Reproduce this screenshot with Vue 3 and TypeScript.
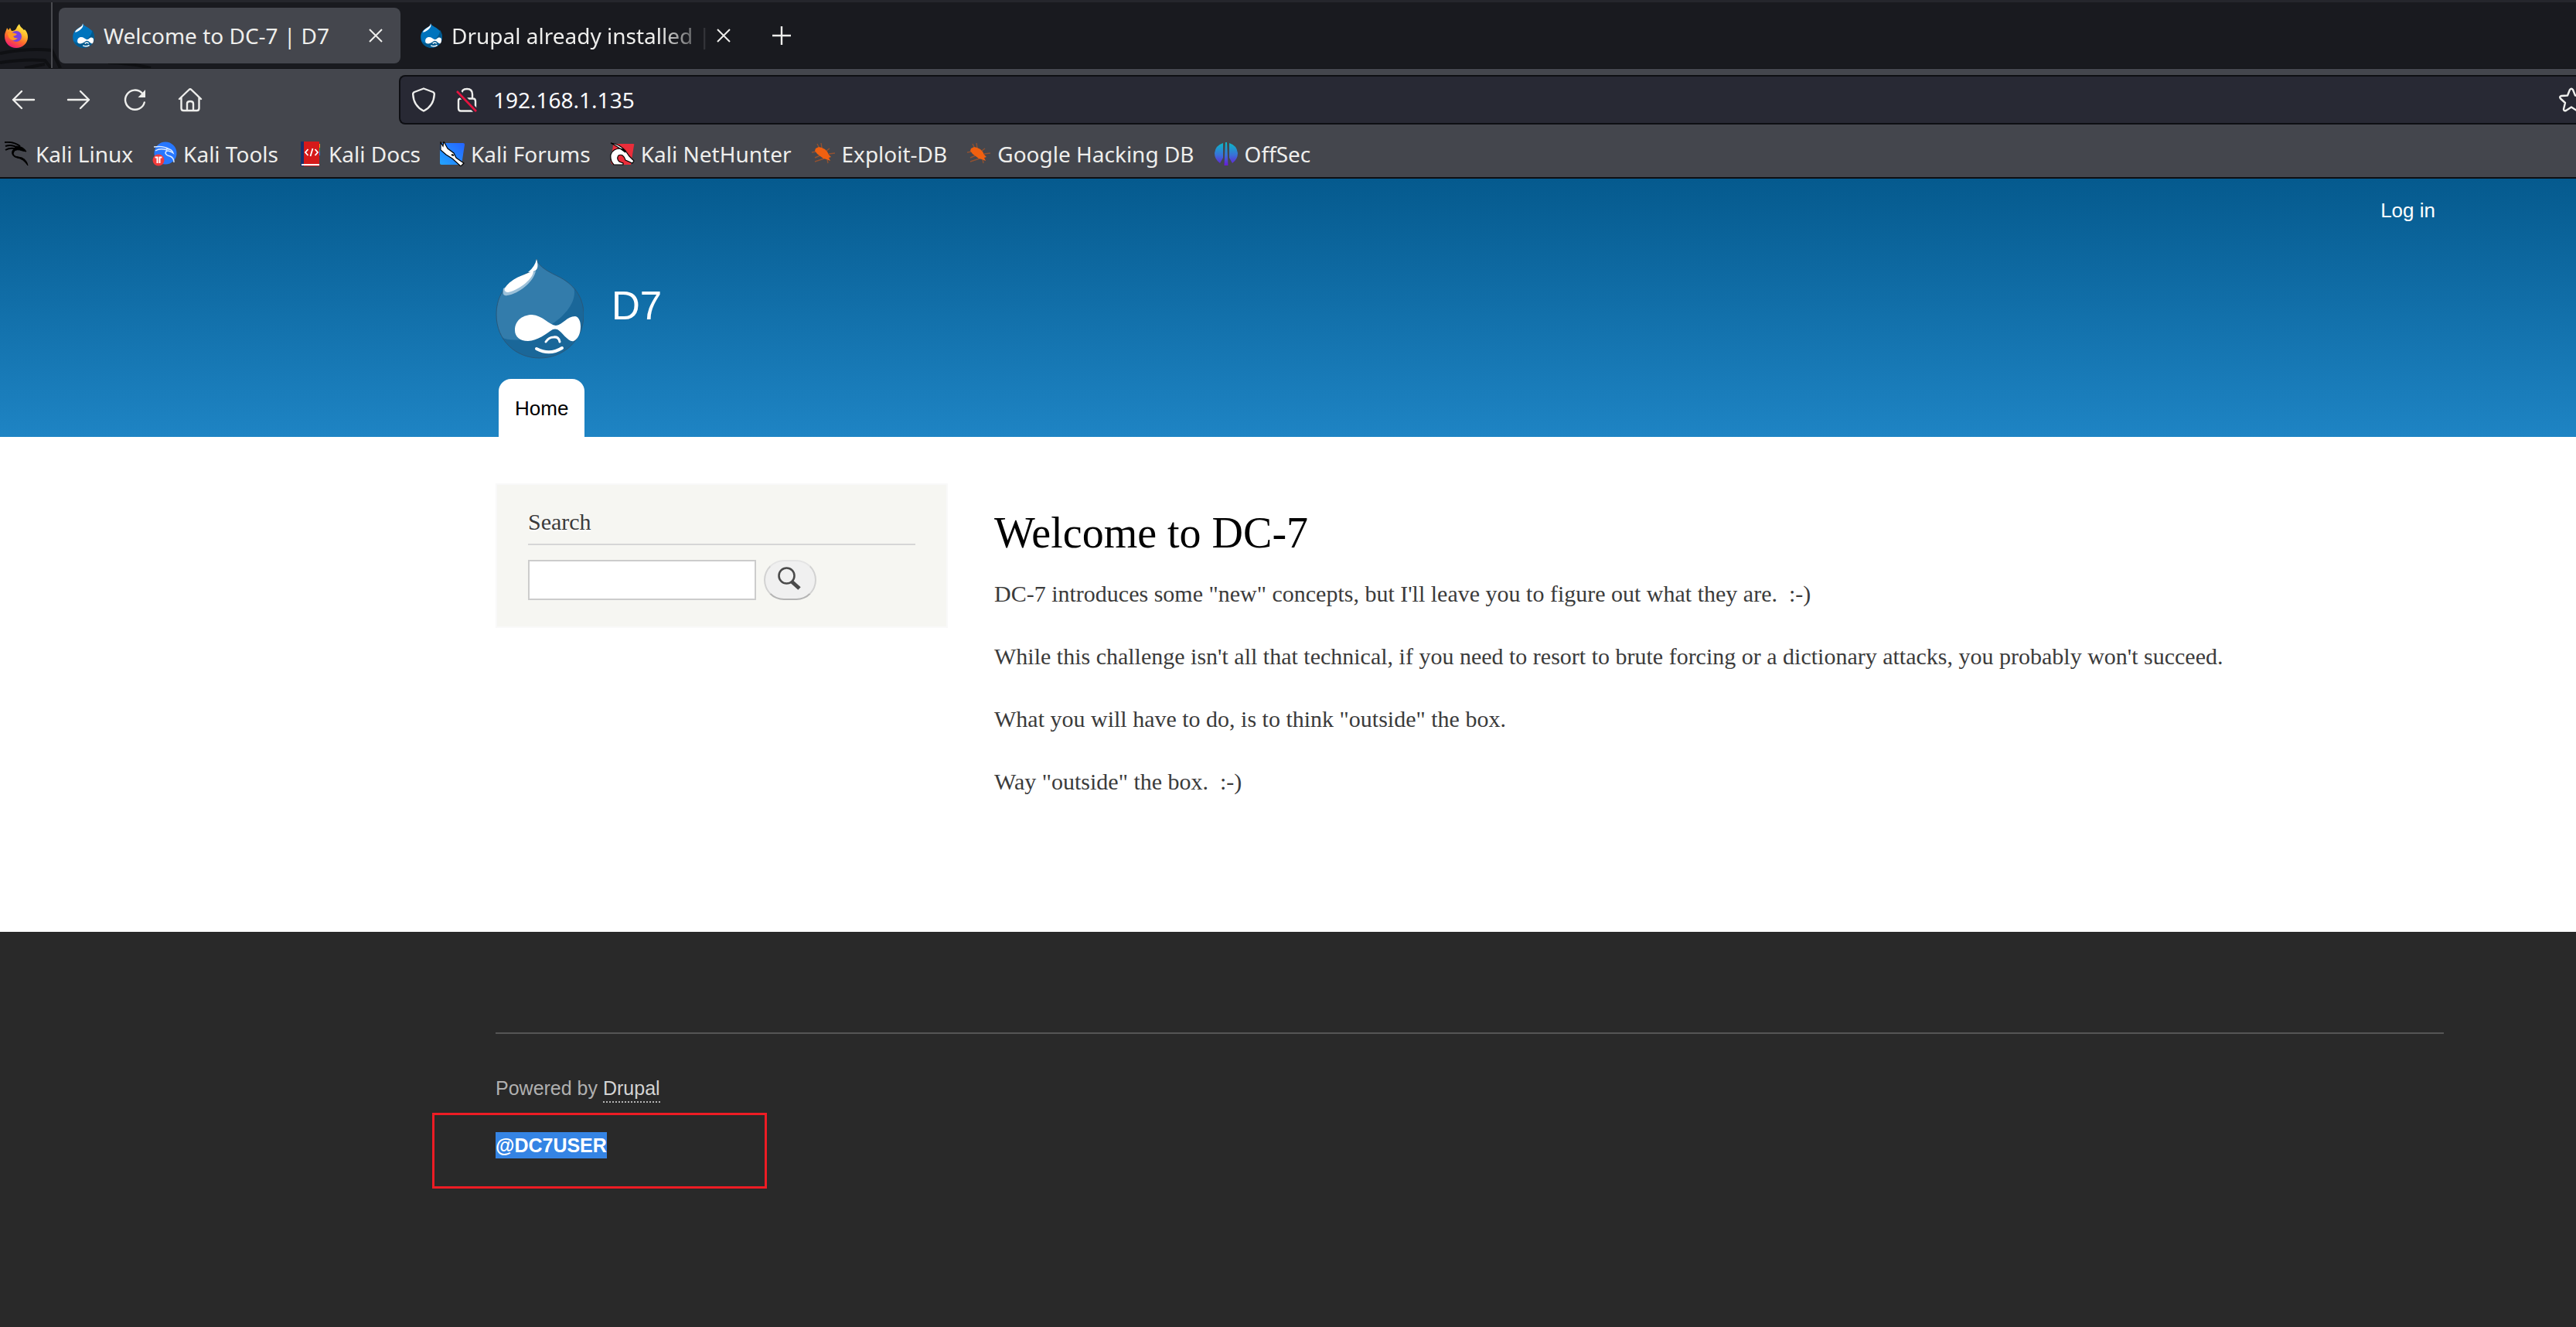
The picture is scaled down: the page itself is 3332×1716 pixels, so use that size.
<script setup lang="ts">
import { ref } from 'vue'

interface Tab {
  title: string
  active: boolean
}

interface Bookmark {
  label: string
  icon: string
}

const tabs: Tab[] = [
  { title: 'Welcome to DC-7 | D7', active: true },
  { title: 'Drupal already installed | D7', active: false },
]

const bookmarks: Bookmark[] = [
  { label: 'Kali Linux', icon: 'kali' },
  { label: 'Kali Tools', icon: 'tools' },
  { label: 'Kali Docs', icon: 'docs' },
  { label: 'Kali Forums', icon: 'forums' },
  { label: 'Kali NetHunter', icon: 'nethunter' },
  { label: 'Exploit-DB', icon: 'exploit' },
  { label: 'Google Hacking DB', icon: 'exploit' },
  { label: 'OffSec', icon: 'offsec' },
]

const paragraphs: string[] = [
  'DC-7 introduces some "new" concepts, but I\'ll leave you to figure out what they are.\u00a0 :-)',
  "While this challenge isn't all that technical, if you need to resort to brute forcing or a dictionary attacks, you probably won't succeed.",
  'What you will have to do, is to think "outside" the box.',
  'Way "outside" the box.\u00a0 :-)',
]

const address = ref('192.168.1.135')
const query = ref('')
</script>

<template>
  <div class="window">
    <div class="tabstrip">
      <svg class="wallpaper" viewBox="0 0 240 89" aria-hidden="true">
        <path d="M0 70Q36 63 67 66L78 89M0 82Q30 77 58 79L66 89M32 89L58 84M140 82Q172 83 195 89" fill="none" stroke="#0f1013" stroke-width="4" />
      </svg>
      <div class="pinned">
        <svg class="icon" viewBox="0 0 32 32" aria-hidden="true">
          <defs>
            <linearGradient id="fox" x1="0.8" y1="0" x2="0.3" y2="1">
              <stop offset="0" stop-color="#fff44f" />
              <stop offset="0.35" stop-color="#ffbd2e" />
              <stop offset="0.65" stop-color="#ff6a2b" />
              <stop offset="1" stop-color="#f0147a" />
            </linearGradient>
          </defs>
          <path d="M1 17C1 12 3 10 4 6L6 9L8 6L10 10C13 10 15 9 16 7C17 4 19 2 20 1C21 5 24 6 26 9L27 8C30 11 31 15 31 18C31 26 24 32 16 32C8 32 1 26 1 17Z" fill="url(#fox)" />
          <circle cx="16" cy="17" r="7" fill="#7a3fe0" />
          <path d="M5 13Q11 11 17 14Q16 16 12 17Q14 20 18 19Q14 24 9 21Q5 18 5 13Z" fill="#ff9722" />
        </svg>
      </div>
      <div v-for="tab in tabs" :key="tab.title" class="tab" :class="{ active: tab.active }">
        <svg class="favicon" viewBox="0 0 114 130" aria-hidden="true">
          <path d="M53 1C58 14 74 18 88 28C105 40 114 54 114 74C114 106 88 129 58 129C26 129 1 106 1 74C1 54 8 40 25 28C37 20 53 16 53 1Z" fill="#0074bd" />
          <path d="M6 92C18 108 40 108 60 96C86 80 102 60 102 36C116 54 116 80 107 98C96 119 76 129 58 129C34 129 14 116 6 92Z" fill="#00598e" />
          <path d="M12 48C16 32 36 26 50 12C52 8 52 4 53 1Q58 16 48 26Q32 44 12 48Z" fill="#fff" />
          <path d="M25 94C25 74 46 68 62 79C70 85 78 88 86 81C98 71 110 76 110 88C110 108 99 112 90 101C80 90 74 90 64 98C46 112 25 110 25 94Z" fill="#fff" />
          <path d="M64 107Q76 96 84 107M54 117Q72 126 88 115" fill="none" stroke="#fff" stroke-width="6" />
        </svg>
        <span class="tab-title">{{ tab.title }}</span>
        <button class="tab-close" aria-label="Close tab">
          <svg class="icon" viewBox="0 0 32 32" aria-hidden="true">
            <path d="M8 8L24 24M24 8L8 24" fill="none" stroke="#eeeeec" stroke-width="2" />
          </svg>
        </button>
      </div>
      <button class="new-tab" aria-label="New tab">
        <svg class="icon" viewBox="0 0 32 32" aria-hidden="true">
          <path d="M16 4V28M4 16H28" fill="none" stroke="#eeeeec" stroke-width="2.4" />
        </svg>
      </button>
    </div>

    <div class="toolbar">
      <div class="nav-buttons">
        <button aria-label="Back">
          <svg class="icon" viewBox="0 0 32 32" aria-hidden="true">
            <path d="M14 5L3 16L14 27M3 16H30" class="line" />
          </svg>
        </button>
        <button aria-label="Forward">
          <svg class="icon" viewBox="0 0 32 32" aria-hidden="true">
            <path d="M18 5L29 16L18 27M29 16H2" class="line" />
          </svg>
        </button>
        <button aria-label="Reload">
          <svg class="icon" viewBox="0 0 32 32" aria-hidden="true">
            <path d="M25.500 7.200A12.600 12.600 0 1 0 28.800 19.500" class="line" />
            <path d="M30 3V13H20.500Z" fill="#eeeeec" />
          </svg>
        </button>
        <button aria-label="Home">
          <svg class="icon" viewBox="0 0 32 32" aria-hidden="true">
            <path d="M2 15L14.500 3Q16 1.500 17.500 3L30 15M4.500 13V27Q4.500 30 7.500 30H24.500Q27.500 30 27.500 27V13M12 30V21Q12 18 16 18Q20 18 20 21V30" class="line" />
          </svg>
        </button>
      </div>
      <div class="urlbar">
        <svg class="icon" viewBox="0 0 32 32" aria-hidden="true">
          <path d="M16 1.500L28 6Q30 7 29.800 9Q29 24 16 30.500Q3 24 2.200 9Q2 7 4 6Z" class="line" />
        </svg>
        <svg class="icon" viewBox="0 0 32 32" aria-hidden="true">
          <path d="M9 14V9Q9 2 16 2Q23 2 23 9V14M7 14.500H24Q27 14.500 27 18V27Q27 30.500 24 30.500H8Q5 30.500 5 27V17Q5 14.500 8 14.500" class="line" />
          <path d="M4 5L28 31" stroke="#282934" stroke-width="7" />
          <path d="M3 5L28 31" stroke="#e5133f" stroke-width="2.600" />
        </svg>
        <input v-model="address" type="text" aria-label="Address" />
        <svg class="icon star" viewBox="0 0 32 32" aria-hidden="true">
          <path d="M14 3Q16 .500 18 3L21 10.500L29 11Q32 12 30 14.500L24 20L26 28Q26 31 23 30L16 25.500L9 30Q6 31 6 28L8 20L2 14.500Q0 12 3 11L11 10.500Z" class="line" />
        </svg>
      </div>
    </div>

    <nav class="bookmarks" aria-label="Bookmarks">
      <a v-for="mark in bookmarks" :key="mark.label" href="#">
        <svg class="icon" viewBox="0 0 32 32" aria-hidden="true">
          <template v-if="mark.icon === 'kali'">
            <path d="M0 1Q12 0 20 6M1 6Q10 3 18 9M1 11Q8 7 16 10" fill="none" stroke="#000" stroke-width="2" />
            <path d="M15 6Q24 6 28 13L23 12Q15 9 12 13Q9 19 18 20Q28 21 30 31Q24 22 16 21Q8 19 10 12Z" fill="#000" stroke="#000" stroke-width="1" />
          </template>
          <template v-else-if="mark.icon === 'tools'">
            <circle cx="17" cy="15" r="14.500" fill="#2777ff" />
            <path d="M2 7Q14 5 22 10M4 12Q10 8 19 11M18 10Q25 9 27 15Q18 9 17 15Q18 18 23 19Q28 21 28 27" fill="none" stroke="#dcebff" stroke-width="1.500" />
            <circle cx="8" cy="24" r="7.500" fill="#f23a3a" />
            <path d="M3.500 20.500H6.500V28M12.500 20.500H9.500V28" fill="none" stroke="#fff" stroke-width="2" />
          </template>
          <template v-else-if="mark.icon === 'docs'">
            <path d="M27 3H29V8H27Z" fill="#f59b23" />
            <path d="M27 8H29V13H27Z" fill="#28a35a" />
            <path d="M27 13H29V18H27Z" fill="#2777ff" />
            <path d="M4 0H28V32H4Z" fill="#d51a1a" />
            <path d="M4 0H8V32H4Z" fill="#17316b" />
            <path d="M5 29H28V31H5Z" fill="#fff" />
            <path d="M13.500 10L10 14L13.500 18M22.500 10L26 14L22.500 18M19.500 9L16.500 19" fill="none" stroke="#fff" stroke-width="1.800" />
          </template>
          <template v-else-if="mark.icon === 'forums'">
            <defs>
              <linearGradient id="forum" x1="0" y1="1" x2="1" y2="0">
                <stop offset="0" stop-color="#23a5ff" />
                <stop offset="1" stop-color="#2563ff" />
              </linearGradient>
            </defs>
            <path d="M2 2H30Q32 2 32 4L28 30H2Q0 30 0 28V4Z" fill="url(#forum)" />
            <path d="M1 1L4 6L5 0L10 9L18 15L21 21L31 28L27 32L16 22L8 17L1 11Z" fill="#fff" stroke="#000" stroke-width="1.200" />
            <path d="M15 17L18 18" stroke="#000" stroke-width="2" />
          </template>
          <template v-else-if="mark.icon === 'nethunter'">
            <path d="M4 5Q3 3 6 3H30Q32 3 31 5L27 30H5Q2 30 1 26Z" fill="#ea2d3a" />
            <path d="M1 2Q12 3 20 12L25 19L31 25L29 28L20 24Q17 15 11 18Q8 22 12 26L17 28V30H5Q0 25 1 17Q4 9 13 9Q18 10 20 14Q9 6 1 2Z" fill="#fff" stroke="#000" stroke-width="1.200" />
          </template>
          <template v-else-if="mark.icon === 'exploit'">
            <path d="M6 9L10 7L14 8L18 10L21 13L23 17L26 20L23 21L25 25L20 23L16 22L12 19L8 16L5 12Z" fill="#f06010" />
            <path d="M10 7L8 3M14 8L13 2M20 12L24 9M23 16L31 15M7 13L1 14M12 18L5 21M17 22L5 26M21 23L22 28" fill="none" stroke="#f06010" stroke-width="1.400" opacity="0.450" />
          </template>
          <template v-else>
            <defs>
              <linearGradient id="offsec" x1="0" y1="0" x2="0" y2="32" gradientUnits="userSpaceOnUse">
                <stop offset="0" stop-color="#06bfc4" />
                <stop offset="0.550" stop-color="#3a70d8" />
                <stop offset="1" stop-color="#6c12d6" />
              </linearGradient>
            </defs>
            <path d="M12 2V21L8 28Q1 23 1 15Q2 5 12 2ZM20 2V21L24 28Q31 23 31 15Q30 5 20 2ZM15 1H17L18.500 31H13.500Z" fill="url(#offsec)" />
          </template>
        </svg>
        <span>{{ mark.label }}</span>
      </a>
    </nav>

    <header class="site-header">
      <div class="account"><a href="#">Log in</a></div>
      <div class="branding">
        <a href="#" aria-label="Home page">
          <svg class="logo" viewBox="0 0 114 130" aria-hidden="true">
            <path d="M53 1C56 12 70 18 84 25C104 36 114 53 114 73C114 106 88 129 57 129C26 129 1 106 1 73C1 53 9 37 25 28C38 20 53 16 53 1Z" fill="#337cab" />
            <path d="M8 102C14 106 24 106 34 105L70 87C88 76 102 60 102 44Q102 40 101 37C111 48 114 60 114 73C114 106 88 129 57 129C36 129 18 119 8 102Z" fill="#1a6799" />
            <path d="M53 1C56 12 70 18 84 25C104 36 114 53 114 73C114 106 88 129 57 129C26 129 1 106 1 73C1 53 9 37 25 28C38 20 53 16 53 1Z" fill="none" stroke="#29587a" stroke-width="1" />
            <path d="M10 39C9 46 10 49 15 48C30 46 50 30 52 16Z" fill="#9bc0d9" />
            <path d="M12 42C10 37 21 28 30 24C40 20 46 17 49 17C48 28 28 42 16 44Q13 44 12 42ZM53 1C55 8 56 15 49 17Q45 18 42 18Q51 11 53 1Z" fill="#fff" />
            <path d="M25 93C25 79 37 73 47 73C61 74 69 86 78 87C87 86 92 75 103 75C108 76 110 82 110 88C110 98 106 105 101 107C94 109 86 95 80 92Q77 91 74 92C66 97 54 107 42 107C31 107 25 101 25 93Z" fill="#fff" />
            <path d="M65 108Q69 102 75 102Q82 101 83 108" fill="none" stroke="#fff" stroke-width="3" stroke-linecap="round" />
            <path d="M53 117Q70 126 86 116" fill="none" stroke="#fff" stroke-width="4" stroke-linecap="round" />
          </svg>
        </a>
        <a class="site-name" href="#">D7</a>
      </div>
      <nav class="menu" aria-label="Main menu"><a href="#">Home</a></nav>
    </header>

    <main class="main">
      <aside class="sidebar">
        <h2><label for="site-search">Search</label></h2>
        <form @submit.prevent>
          <input id="site-search" v-model="query" type="search" />
          <button type="submit" aria-label="Search">
            <svg class="icon" viewBox="0 0 32 32" aria-hidden="true">
              <ellipse cx="12.500" cy="12.500" rx="10" ry="10" fill="none" stroke="#4b4b4b" stroke-width="2.600" />
              <path d="M19 20L29 29" stroke="#4b4b4b" stroke-width="5" />
            </svg>
          </button>
        </form>
      </aside>
      <article class="content">
        <h1>Welcome to DC-7</h1>
        <p v-for="text in paragraphs" :key="text">{{ text }}</p>
      </article>
    </main>

    <footer class="site-footer">
      <div class="footer-inner">
        <p class="powered">Powered by <a href="#">Drupal</a></p>
        <div class="user">
          <span class="selected">@DC7USER</span>
          <span class="marker"></span>
        </div>
      </div>
    </footer>
  </div>
</template>

<style>
body {
  margin: 0;
  background: #292929;
}
</style>

<style scoped>
.window {
  display: flex;
  flex-direction: column;
  min-height: 100vh;
  overflow: hidden;
  background: #fff;
  font-family: 'Liberation Sans', sans-serif;
  font-size: 26px;
}

a {
  color: inherit;
  text-decoration: none;
}

button {
  display: flex;
  align-items: center;
  justify-content: center;
  padding: 0;
  border: 0;
  background: none;
}

svg {
  display: block;
}

.icon {
  flex: none;
  width: 32px;
  height: 32px;
}

.line {
  fill: none;
  stroke: #eeeeec;
  stroke-width: 2.4px;
  stroke-linecap: round;
  stroke-linejoin: round;
}

.tabstrip,
.toolbar,
.bookmarks {
  color: #eeeeec;
  font-family: 'Noto Sans', sans-serif;
  font-size: 28px;
}

.tabstrip {
  position: relative;
  display: flex;
  align-items: center;
  gap: 8px;
  height: 85px;
  border-top: 3px solid #25262c;
  border-bottom: 1px solid #101114;
  background: #191a1f;
}

.wallpaper {
  position: absolute;
  bottom: 0;
  left: 0;
  width: 240px;
  height: 89px;
}

.pinned {
  position: relative;
  display: flex;
  align-items: center;
  align-self: stretch;
  box-sizing: border-box;
  width: 68px;
  padding-left: 5px;
  border-right: 2px solid #4a4b50;
}

.tab {
  position: relative;
  display: flex;
  align-items: center;
  box-sizing: border-box;
  width: 442px;
  height: 72px;
  padding: 0 16px 0 17px;
  border-radius: 8px;
}

.tab.active {
  background: #44464d;
}

.favicon {
  flex: none;
  width: 30px;
  height: 32px;
}

.tab-title {
  flex: 1;
  margin-left: 11px;
  overflow: hidden;
  white-space: nowrap;
  mask-image: linear-gradient(to right, #000 80%, transparent);
}

.active .tab-title {
  mask-image: none;
}

.new-tab {
  width: 70px;
  height: 64px;
}

.toolbar {
  display: flex;
  padding: 8px 0;
  background: #44464d;
}

.nav-buttons {
  display: flex;
  gap: 12px;
  width: 516px;
}

.nav-buttons button {
  width: 60px;
  height: 64px;
}

.urlbar {
  display: flex;
  flex: 1;
  align-items: center;
  gap: 24px;
  box-sizing: border-box;
  height: 64px;
  padding-left: 14px;
  border: 2px solid #0e0f13;
  border-right: 0;
  border-radius: 8px 0 0 8px;
  background: #282934;
}

.urlbar input {
  flex: 1;
  min-width: 0;
  padding: 0;
  margin-left: -6px;
  border: 0;
  outline: 0;
  background: none;
  color: #fbfbfe;
  font: inherit;
}

.star {
  margin-right: -10px;
}

.bookmarks {
  display: flex;
  gap: 25px;
  padding-left: 6px;
  border-bottom: 2px solid #0e0f13;
  background: #44464d;
  line-height: 60px;
  white-space: nowrap;
}

.bookmarks a {
  display: flex;
  align-items: center;
  gap: 8px;
}

.site-header,
.main,
.site-footer {
  padding-right: 171px;
  padding-left: 641px;
}

.site-header {
  padding-top: 21px;
  background: linear-gradient(#055a8e, #1e84c4);
  color: #fff;
}

.account {
  padding-right: 11px;
  line-height: 40px;
  text-align: right;
}

.branding {
  display: flex;
  align-items: center;
  gap: 36px;
  margin-top: 42px;
}

.logo {
  width: 114px;
  height: 130px;
}

.site-name {
  padding-bottom: 6px;
  font-size: 51px;
  line-height: 60px;
}

.menu {
  display: flex;
  margin-top: 26px;
  padding-left: 4px;
}

.menu a {
  padding: 2px 21px 0;
  border-radius: 16px 16px 0 0;
  background: #fff;
  color: #000;
  line-height: 73px;
}

.main {
  display: flex;
  align-items: flex-start;
  gap: 60px;
  padding-top: 60px;
  padding-bottom: 136px;
  color: #3b3b3b;
  font-family: 'Liberation Serif', serif;
  font-size: 30px;
  line-height: 46px;
}

.sidebar {
  flex: none;
  box-sizing: border-box;
  width: 585px;
  padding: 25px 40px 34px;
  border: 2px solid #f9f9f9;
  background: #f6f6f2;
}

.sidebar h2 {
  margin: 0 0 19px;
  padding-bottom: 5px;
  border-bottom: 2px solid #d6d6d6;
  font-size: 30px;
  font-weight: 400;
  text-shadow: 0 2px 0 #fff;
}

.sidebar form {
  display: flex;
  gap: 10px;
}

.sidebar input {
  box-sizing: border-box;
  width: 295px;
  height: 52px;
  padding: 4px 8px;
  border: 2px solid #ccc;
  border-radius: 0;
  outline: 0;
  appearance: none;
  background: #fff;
  font: inherit;
}

.sidebar button {
  width: 68px;
  height: 52px;
  padding-right: 2px;
  padding-bottom: 4px;
  border: 2px solid #d2d2d2;
  border-top-color: #e4e4e4;
  border-bottom-color: #b4b4b4;
  border-radius: 26px;
  background: #f0f0f0;
}

.content {
  flex: 1;
  padding-top: 32px;
}

.content h1 {
  margin: 0 0 24px;
  color: #000;
  font-size: 56px;
  font-weight: 400;
  line-height: 64px;
}

.content p {
  margin: 0 0 35px;
}

.site-footer {
  flex: 1;
  padding-top: 130px;
  background: #292929;
  color: #b0b0b0;
  font-size: 25px;
}

.footer-inner {
  padding-top: 52px;
  border-top: 2px solid #555;
}

.powered {
  margin: 0 0 39px;
  line-height: 36px;
}

.powered a {
  padding-bottom: 3px;
  border-bottom: 2px dotted #b5b5b5;
  color: #d4d4d4;
}

.user {
  position: relative;
  display: flex;
}

.selected {
  background: #3584e4;
  color: #fff;
  font-weight: 700;
  line-height: 34px;
}

/* Callout frame laid over the footer around the user handle. */
.marker {
  position: absolute;
  top: -25px;
  left: -82px;
  box-sizing: border-box;
  width: 433px;
  height: 98px;
  border: 3px solid #ed1c24;
}
</style>
